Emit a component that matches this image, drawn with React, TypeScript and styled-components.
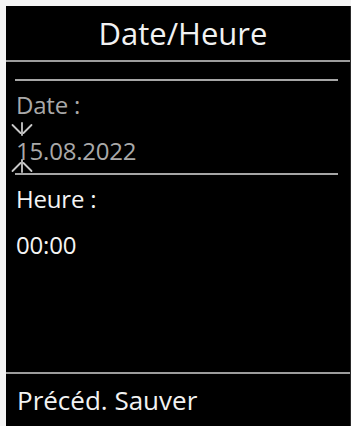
import React from 'react'
import styled, { createGlobalStyle } from 'styled-components'

const GlobalStyle = createGlobalStyle`
  html, body {
    margin: 0;
    padding: 0;
    background: #f4f4f4;
    overflow: hidden;
  }
  body {
    font-family: 'Open Sans', 'Noto Sans', sans-serif;
  }
`

const Frame = styled.div`
  padding: 6px 0 0 6px;
  height: 426px;
  box-sizing: border-box;
`

const Screen = styled.div`
  background: #000;
  height: 100%;
  display: flex;
  flex-direction: column;
  border-right: 1px solid #2a2a2a;
`

const Header = styled.div`
  height: 54px;
  display: flex;
  align-items: center;
  justify-content: center;
  padding-left: 10px;
  color: #f2f2f2;
  font-size: 31px;
  border-bottom: 2px solid #9c9c9c;
`

const Body = styled.div`
  flex: 1;
  display: flex;
  flex-direction: column;
  padding: 17px 10px 0 9px;
`

const Rule = styled.div`
  height: 2px;
  background: #a6a6a6;
  margin-right: 2px;
`

const Field = styled.div<{ $dim?: boolean }>`
  height: 46px;
  display: flex;
  align-items: center;
  padding-left: 1px;
  font-size: 24px;
  letter-spacing: -0.2px;
  color: ${p => (p.$dim ? '#a9a9a9' : '#f4f4f4')};
`

const Selected = styled.div`
  position: relative;
`

const Spark = styled.svg<{ $bottom?: boolean }>`
  position: absolute;
  left: -4px;
  ${p => (p.$bottom ? 'bottom: 0px;' : 'top: -5px;')}
  width: 22px;
  height: 14px;
`

const Footer = styled.div`
  height: 52px;
  border-top: 2px solid #9c9c9c;
  display: flex;
  align-items: center;
  padding-left: 11px;
  color: #f2f2f2;
  font-size: 26px;
`

export default function App() {
  return (
    <>
      <GlobalStyle />
      <Frame>
        <Screen>
          <Header>Date/Heure</Header>
          <Body>
            <Rule />
            <Field $dim>Date :</Field>
            <Selected>
              <Spark viewBox="0 0 22 14">
                <g stroke="#c8c8c8" strokeWidth="1.8" fill="none" strokeLinecap="round">
                  <line x1="11" y1="1" x2="11" y2="13" />
                  <line x1="1.5" y1="3" x2="9.5" y2="11" />
                  <line x1="20.5" y1="3" x2="12.5" y2="11" />
                </g>
              </Spark>
              <Field $dim>15.08.2022</Field>
              <Spark $bottom viewBox="0 0 22 14">
                <g stroke="#c8c8c8" strokeWidth="1.8" fill="none" strokeLinecap="round">
                  <line x1="11" y1="1" x2="11" y2="13" />
                  <line x1="9.5" y1="4" x2="1.5" y2="12" />
                  <line x1="12.5" y1="4" x2="20.5" y2="12" />
                </g>
              </Spark>
            </Selected>
            <Rule />
            <Field>Heure :</Field>
            <Field>00:00</Field>
          </Body>
          <Footer>Précéd. Sauver</Footer>
        </Screen>
      </Frame>
    </>
  )
}
